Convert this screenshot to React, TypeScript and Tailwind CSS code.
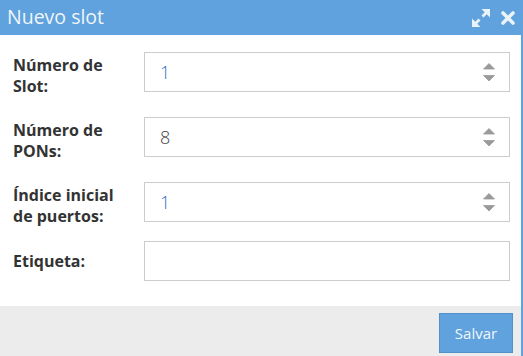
import React from "react";

const fields = [
    { label: ["Número de", "Slot:"], value: "1", spinner: true, blue: true, mb: "mb-[20px]" },
    { label: ["Número de", "PONs:"], value: "8", spinner: true, blue: false, mb: "mb-[20px]" },
    { label: ["Índice inicial", "de puertos:"], value: "1", spinner: true, blue: true, mb: "mb-[14px]" },
    { label: ["Etiqueta:"], value: "", spinner: false, blue: false, mb: "" },
];

const ExpandIcon = () => (
    <svg width="18" height="18" viewBox="0 0 18 18" fill="#eaf2fa">
        <polygon points="9.5,0 18,0 18,8.5" />
        <line x1="15" y1="3" x2="10.5" y2="7.5" stroke="#eaf2fa" strokeWidth="2.8" />
        <polygon points="0,9.5 0,18 8.5,18" />
        <line x1="3" y1="15" x2="7.5" y2="10.5" stroke="#eaf2fa" strokeWidth="2.8" />
    </svg>
);

const CloseIcon = () => (
    <svg width="14" height="14" viewBox="0 0 14 14">
        <path d="M2 2 L12 12 M12 2 L2 12" stroke="#eaf2fa" strokeWidth="3.6" strokeLinecap="round" />
    </svg>
);

const Spinner = () => (
    <svg width="12" height="19" viewBox="0 0 12 19" fill="#9a9a9a">
        <path d="M0.5 6 L6 0.5 L11.5 6 Z" strokeLinejoin="round" stroke="#9a9a9a" strokeWidth="0.8" />
        <path d="M0.5 12.5 L11.5 12.5 L6 18 Z" strokeLinejoin="round" stroke="#9a9a9a" strokeWidth="0.8" />
    </svg>
);

const FieldRow = ({ field }: { field: (typeof fields)[number] }) => {
    const single = field.label.length === 1;
    return (
        <div className={`flex ${single ? "items-center" : "items-start"} ${field.mb}`}>
            <div
                className={`w-[144px] shrink-0 pl-[13px] text-[16px] leading-[21px] font-bold text-[#333] ${single ? "" : "pt-[3px]"}`}
            >
                {field.label.map((line) => (
                    <div key={line}>{line}</div>
                ))}
            </div>
            <div className="flex-1 h-[40px] border border-[#cccccc] bg-white flex items-center pl-[15px] pr-[14px]">
                <span
                    className={`flex-1 text-[18px] font-light ${field.blue ? "text-[#2a6ec8]" : "text-[#444]"}`}
                >
                    {field.value}
                </span>
                {field.spinner ? <Spinner /> : null}
            </div>
        </div>
    );
};

export default function App() {
    return (
        <div
            className="w-[523px] h-[356px] flex flex-col bg-white border-r-2 border-[#5fa2dd]"
            style={{ fontFamily: '"Open Sans", "Liberation Sans", sans-serif' }}
        >
            <div className="h-[35px] bg-[#5fa2dd] flex items-center pl-[7px] pr-[6px] shrink-0">
                <div className="flex-1 text-[19.5px] text-[#f0f5fa] leading-none pb-[1px]">Nuevo slot</div>
                <div className="flex items-center gap-[11px]">
                    <ExpandIcon />
                    <CloseIcon />
                </div>
            </div>
            <div className="flex-1 pt-[17px] pr-[11px]">
                {fields.map((field, i) => (
                    <FieldRow key={i} field={field} />
                ))}
            </div>
            <div className="h-[50px] bg-[#ececec] flex justify-end items-start pt-[7px] pr-[8px] shrink-0">
                <button className="w-[74px] h-[40px] bg-[#5fa2dd] border border-[#5290c9] text-[#f2f7fc] text-[15px]">
                    Salvar
                </button>
            </div>
        </div>
    );
}
